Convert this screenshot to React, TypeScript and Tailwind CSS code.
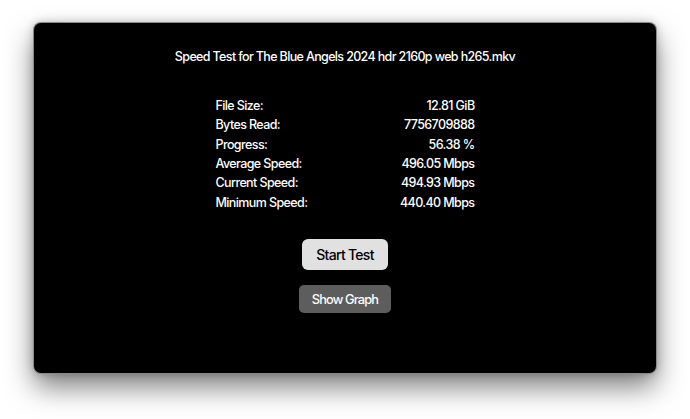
import React from "react";

const rows: [string, string][] = [
  ["File Size:", "12.81 GiB"],
  ["Bytes Read:", "7756709888"],
  ["Progress:", "56.38 %"],
  ["Average Speed:", "496.05 Mbps"],
  ["Current Speed:", "494.93 Mbps"],
  ["Minimum Speed:", "440.40 Mbps"],
];

export default function App() {
  return (
    <div
      className="w-[690px] h-[419px] bg-white pt-[23px] pl-[34px] overflow-hidden"
      style={{ fontFamily: "Inter, 'Noto Sans', sans-serif" }}
    >
      <div className="w-[622px] h-[350px] bg-black rounded-[7px] flex flex-col items-center shadow-[0_14px_28px_rgba(0,0,0,0.5),0_0_10px_rgba(0,0,0,0.25)] ring-1 ring-[#8a8a8a]">
        <div className="mt-[26px] h-[16px] leading-[16px] text-[12.5px] font-medium tracking-[-0.64px] text-white">
          Speed Test for The Blue Angels 2024 hdr 2160p web h265.mkv
        </div>
        <div className="mt-[31.5px] w-[259px] flex flex-col text-[12.5px] font-medium tracking-[-0.6px] text-white">
          {rows.map(([k, v]) => (
            <div key={k} className="h-[19.4px] flex items-center justify-between">
              <span>{k}</span>
              <span>{v}</span>
            </div>
          ))}
        </div>
        <button className="mt-[26.5px] w-[86px] h-[31px] rounded-[6px] bg-[#e1e1e1] text-black text-[14px] font-medium tracking-[-0.7px] flex items-center justify-center">
          Start Test
        </button>
        <button className="mt-[15px] w-[92px] h-[28px] rounded-[5px] bg-[#5d5d5d] text-white text-[12.8px] font-medium tracking-[-0.85px] flex items-center justify-center">
          Show Graph
        </button>
      </div>
    </div>
  );
}
